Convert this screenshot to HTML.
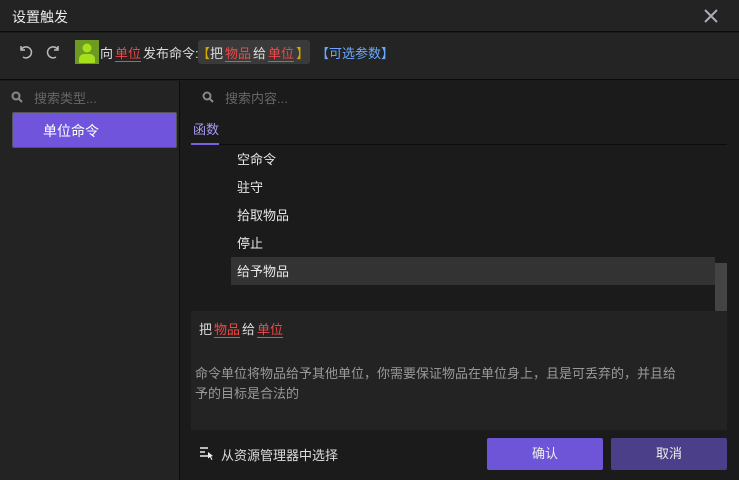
<!DOCTYPE html>
<html><head><meta charset="utf-8"><style>
*{margin:0;padding:0;box-sizing:border-box}
body{width:739px;height:480px;background:#1b1b1b;font-family:"Liberation Sans","Noto Sans CJK SC",sans-serif;font-size:13px;color:#ddd;position:relative;overflow:hidden}
.a{position:absolute;white-space:nowrap}
.r{color:#f04848;text-decoration:underline;text-underline-offset:3px;padding:0 2px}
.bl,.br{display:inline-block;width:7px;overflow:hidden;vertical-align:top;color:#d4a800}
.bl span{margin-left:-6px}
</style></head><body>
<div class="a" style="left:0;top:0;width:739px;height:32px;background:#232323;border-bottom:1px solid #0c0c0c"></div>
<div class="a" style="left:12px;top:7px;font-size:14px;color:#e8e8e8">设置触发</div>
<svg class="a" style="left:704px;top:9px" width="14" height="14"><path d="M1 1L13 13M13 1L1 13" stroke="#aab" stroke-width="2"/></svg>
<div class="a" style="left:0;top:33px;width:739px;height:47px;background:#242424;border-bottom:1px solid #0c0c0c"></div>
<svg class="a" style="left:17px;top:43px" width="16" height="16"><path d="M4 3v4h4M4 7a5.5 5.5 0 1 1 2 7" fill="none" stroke="#bbb" stroke-width="1.5"/></svg>
<svg class="a" style="left:46px;top:43px" width="16" height="16"><path d="M12 3v4H8M12 7a5.5 5.5 0 1 0 -2 7" fill="none" stroke="#bbb" stroke-width="1.5"/></svg>
<div class="a" style="left:75px;top:40px;width:24px;height:24px;background:#6f9a22"><svg width="24" height="24"><circle cx="12" cy="8" r="4.5" fill="#a6e01c"/><path d="M4 23v-4a5 5 0 0 1 5-5h6a5 5 0 0 1 5 5v4z" fill="#a6e01c"/></svg></div>
<div class="a" style="left:100px;top:43px">向<span class="r">单位</span>发布命令:</div>
<div class="a" style="left:198px;top:40px;width:112px;height:24px;background:#3a3a3a;border-radius:3px"></div>
<div class="a" style="left:203px;top:43px"><span class="bl"><span>【</span></span>把<span class="r">物品</span>给<span class="r">单位</span><span class="br">】</span></div>
<div class="a" style="left:316px;top:43px;color:#6aa8ff">【可选参数】</div>
<div class="a" style="left:0;top:81px;width:180px;height:399px;background:#232323;border-right:1px solid #0c0c0c"></div>
<svg class="a" style="left:11px;top:91px" width="12" height="12"><circle cx="5" cy="5" r="3.5" fill="none" stroke="#888" stroke-width="2"/><path d="M7.5 7.5L11 11" stroke="#888" stroke-width="2"/></svg>
<div class="a" style="left:34px;top:88px;color:#666">搜索类型...</div>
<div class="a" style="left:12px;top:112px;width:165px;height:36px;background:#7055dc;border:1px solid #555;border-radius:2px"></div>
<div class="a" style="left:43px;top:121px;color:#fff;font-size:14px">单位命令</div>
<svg class="a" style="left:202px;top:91px" width="12" height="12"><circle cx="5" cy="5" r="3.5" fill="none" stroke="#888" stroke-width="2"/><path d="M7.5 7.5L11 11" stroke="#888" stroke-width="2"/></svg>
<div class="a" style="left:225px;top:88px;color:#666">搜索内容...</div>
<div class="a" style="left:193px;top:119px;color:#a99af0">函数</div>
<div class="a" style="left:191px;top:143px;width:28px;height:2px;background:#7a60e0"></div>
<div class="a" style="left:219px;top:144px;width:508px;height:1px;background:#0c0c0c"></div>
<div class="a" style="left:231px;top:257px;width:484px;height:28px;background:#333"></div>
<div class="a" style="left:715px;top:263px;width:12px;height:48px;background:#444"></div>
<div class="a" style="left:237px;top:146px;line-height:28px;color:#e8e8e8">空命令<br>驻守<br>拾取物品<br>停止<br>给予物品</div>
<div class="a" style="left:191px;top:311px;width:536px;height:119px;background:#232323"></div>
<div class="a" style="left:199px;top:319px;color:#ddd">把<span class="r">物品</span>给<span class="r">单位</span></div>
<div class="a" style="left:195px;top:364px;color:#999;line-height:20px">命令单位将物品给予其他单位，你需要保证物品在单位身上，且是可丢弃的，并且给<br>予的目标是合法的</div>
<svg class="a" style="left:200px;top:446px" width="14" height="14"><path d="M0 2h8M0 6h5M0 10h8" stroke="#eee" stroke-width="1.5"/><path d="M8 6l5 4-2 .5 1.5 3-1 .5-1.5-3-2 1.5z" fill="#eee"/></svg>
<div class="a" style="left:221px;top:445px;color:#ddd">从资源管理器中选择</div>
<div class="a" style="left:487px;top:438px;width:116px;height:32px;background:#6e55d8;border-radius:2px;color:#eee;text-align:center;line-height:32px">确认</div>
<div class="a" style="left:611px;top:438px;width:116px;height:32px;background:#4b3f8a;border-radius:2px;color:#eee;text-align:center;line-height:32px">取消</div>
</body></html>
